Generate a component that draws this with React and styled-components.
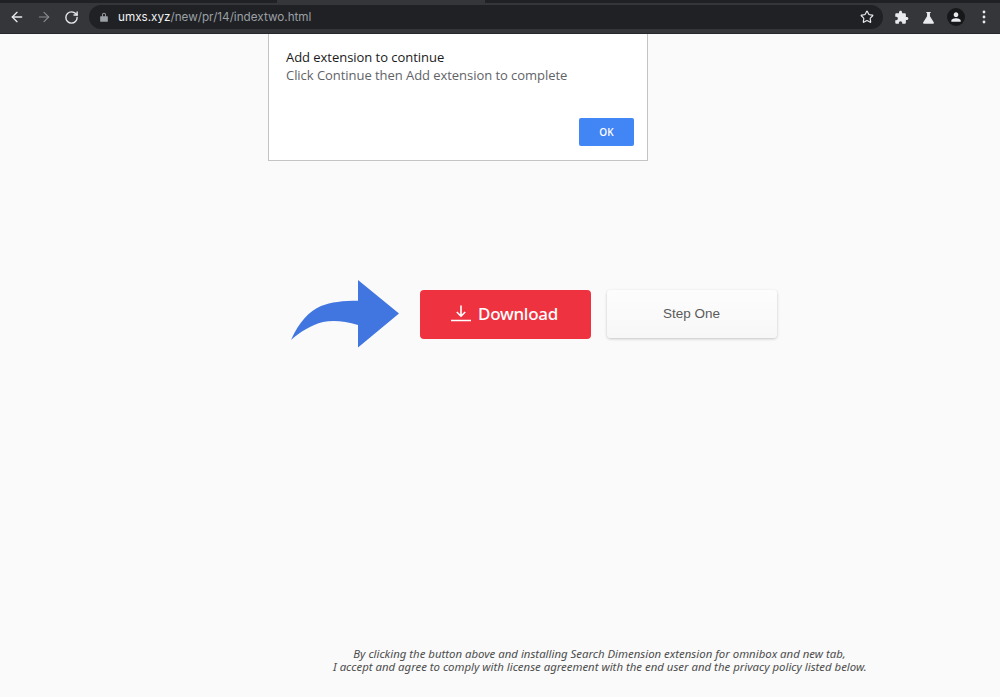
import React from "react";
import styled, { createGlobalStyle } from "styled-components";
import { ArrowLeft, ArrowRight, RotateCw, Star } from "lucide-react";

const Global = createGlobalStyle`
  html, body { margin: 0; padding: 0; background: #fafafa; }
  * { box-sizing: border-box; }
`;

const Page = styled.div`
  width: 1000px;
  height: 697px;
  display: flex;
  flex-direction: column;
  overflow: hidden;
  background: #fafafa;
`;

const TabStrip = styled.div`
  height: 3px;
  flex: none;
  background: #202124;
  display: flex;
`;

const ActiveTab = styled.div`
  width: 208px;
  margin-left: 277px;
  background: #35363a;
`;

const Toolbar = styled.div`
  height: 31px;
  flex: none;
  background: #35363a;
  border-bottom: 1px solid #26272a;
  display: flex;
  align-items: center;
  padding: 0 9px 2px 9px;
  color: #e8eaed;
`;

const NavButton = styled.span`
  width: 16px;
  height: 16px;
  display: flex;
  align-items: center;
  justify-content: center;
  margin-right: ${(p) => p.$gap || 0}px;
  color: ${(p) => (p.$off ? "#8a8c90" : "#e8eaed")};
`;

const Omnibox = styled.div`
  width: 794px;
  height: 24px;
  margin-left: 10px;
  padding: 0 9px 0 10px;
  border-radius: 12px;
  background: #202124;
  display: flex;
  align-items: center;
  font: 11.7px "Inter", "Liberation Sans", sans-serif;
`;

const Host = styled.span`
  color: #f1f3f4;
  margin-left: 9px;
`;

const UrlPath = styled.span`
  color: #9aa0a6;
  flex: 1;
`;

const ToolIcons = styled.div`
  flex: 1;
  display: flex;
  align-items: center;
  justify-content: space-between;
  padding: 0 0 0 11px;
`;

const ToolIcon = styled.svg`
  width: ${(p) => p.$size || 15}px;
  height: ${(p) => p.$size || 15}px;
  fill: #e8eaed;
  flex: none;
`;

const Avatar = styled.span`
  width: 18px;
  height: 18px;
  border-radius: 50%;
  background: #17181a;
  display: flex;
  align-items: center;
  justify-content: center;
`;

const Viewport = styled.main`
  flex: 1;
  display: flex;
  flex-direction: column;
`;

const Dialog = styled.div`
  width: 380px;
  height: 127px;
  margin-left: 268px;
  background: #fff;
  border: 1px solid #c4c4c4;
  border-top: none;
  padding: 14px 13px 14px 17px;
  display: flex;
  flex-direction: column;
  font-family: "Open Sans", "Liberation Sans", sans-serif;
`;

const DialogTitle = styled.div`
  font-size: 13px;
  line-height: 18px;
  letter-spacing: -0.04px;
  color: #1b1b1b;
`;

const DialogText = styled.div`
  font-size: 13px;
  line-height: 18px;
  letter-spacing: -0.05px;
  color: #5f6368;
`;

const DialogFoot = styled.div`
  margin-top: auto;
  display: flex;
  justify-content: flex-end;
`;

const OkButton = styled.button`
  width: 55px;
  height: 28px;
  padding: 0;
  border: none;
  border-radius: 2px;
  background: #4285f4;
  color: #fff;
  font: 600 10px "Open Sans", "Liberation Sans", sans-serif;
`;

const ActionRow = styled.div`
  display: flex;
  align-items: center;
  margin: 119px 0 0 291px;
`;

const Arrow = styled.svg`
  width: 108px;
  height: 68px;
  flex: none;
`;

const DownloadButton = styled.button`
  width: 171px;
  height: 49px;
  margin-left: 21px;
  padding: 0 2px 2px 0;
  border: none;
  border-radius: 4px;
  background: #ee3240;
  color: #fff;
  display: flex;
  align-items: center;
  justify-content: center;
  gap: 7px;
  font: 500 17px "Noto Sans", "Open Sans", sans-serif;
  letter-spacing: -0.25px;
`;

const DownloadIcon = styled.svg`
  width: 20px;
  height: 20px;
  stroke: #fff;
  fill: none;
  flex: none;
`;

const StepButton = styled.button`
  width: 170px;
  height: 48px;
  margin-left: 15.5px;
  padding: 0 0 2px;
  border: none;
  border-radius: 4px;
  background: linear-gradient(#fdfdfd, #f7f7f7);
  box-shadow: 0 1px 3px rgba(0, 0, 0, 0.22);
  color: #5a5a5a;
  font: 13.5px "Liberation Sans", Arial, sans-serif;
`;

const Legal = styled.p`
  margin: auto 134px 24px 0;
  align-self: flex-end;
  width: 533px;
  text-align: center;
  white-space: nowrap;
  font: italic 11.4px/13px "Noto Sans", "Open Sans", sans-serif;
  color: #4d4d4d;
`;

export default function App() {
  return (
    <Page>
      <Global />
      <TabStrip><ActiveTab /></TabStrip>
      <Toolbar>
        <NavButton $gap={11}><ArrowLeft size={16} strokeWidth={2} /></NavButton>
        <NavButton $gap={11} $off><ArrowRight size={16} strokeWidth={1.6} /></NavButton>
        <NavButton><RotateCw size={15} strokeWidth={2.2} /></NavButton>
        <Omnibox>
          <ToolIcon $size={10} viewBox="0 0 10 12">
            <path fill="#9aa0a6" d="M2.6 5V3.4a2.4 2.4 0 0 1 4.8 0V5H9a.6.6 0 0 1 .6.6v5.4a.6.6 0 0 1-.6.6H1a.6.6 0 0 1-.6-.6V5.6A.6.6 0 0 1 1 5zm1.1 0h2.6V3.4a1.3 1.3 0 0 0-2.6 0z" />
          </ToolIcon>
          <Host>umxs.xyz</Host>
          <UrlPath>/new/pr/14/indextwo.html</UrlPath>
          <Star size={14} color="#e8eaed" strokeWidth={2} />
        </Omnibox>
        <ToolIcons>
          <ToolIcon viewBox="0 0 24 24">
            <path d="M20.5 11H19V7c0-1.1-.9-2-2-2h-4V3.5C13 2.12 11.88 1 10.5 1S8 2.12 8 3.5V5H4c-1.1 0-1.99.9-1.99 2v3.8H3.5c1.49 0 2.7 1.21 2.7 2.7s-1.21 2.7-2.7 2.7H2V20c0 1.1.9 2 2 2h3.8v-1.5c0-1.49 1.21-2.7 2.7-2.7 1.49 0 2.7 1.21 2.7 2.7V22H17c1.1 0 2-.9 2-2v-4h1.5c1.38 0 2.5-1.12 2.5-2.5S21.88 11 20.5 11z" />
          </ToolIcon>
          <ToolIcon viewBox="0 0 24 24">
            <path d="M8.5 3h7v1.8h-1.2v5.2l6.1 9.4c.7 1.1-.1 2.6-1.4 2.6H5c-1.3 0-2.1-1.5-1.4-2.6l6.1-9.4V4.8H8.5z" />
          </ToolIcon>
          <Avatar>
            <ToolIcon $size={14} viewBox="0 0 24 24">
              <path d="M12 12c2.21 0 4-1.79 4-4s-1.79-4-4-4-4 1.79-4 4 1.79 4 4 4zm0 2c-2.67 0-8 1.34-8 4v2h16v-2c0-2.66-5.33-4-8-4z" />
            </ToolIcon>
          </Avatar>
          <ToolIcon $size={14} viewBox="0 0 14 14">
            <circle cx="7" cy="2" r="1.4" />
            <circle cx="7" cy="7" r="1.4" />
            <circle cx="7" cy="12" r="1.4" />
          </ToolIcon>
        </ToolIcons>
      </Toolbar>
      <Viewport>
        <Dialog>
          <DialogTitle>Add extension to continue</DialogTitle>
          <DialogText>Click Continue then Add extension to complete</DialogText>
          <DialogFoot><OkButton>OK</OkButton></DialogFoot>
        </Dialog>
        <ActionRow>
          <Arrow viewBox="0 0 108 68">
            <path fill="#4176e0" d="M0 60 C8 42 18 31 30 26 C40 22 52 20.7 67 20.7 L67 0 L108 33.5 L67 67.5 L67 45 C54 41 42 40 32 42 C20 45 9 52 0 60 Z" />
          </Arrow>
          <DownloadButton>
            <DownloadIcon viewBox="0 0 20 20" strokeWidth="1.6">
              <path d="M10 2.5V13M5.8 9 10 13.2 14.2 9M0 17.5H20" />
            </DownloadIcon>
            Download
          </DownloadButton>
          <StepButton>Step One</StepButton>
        </ActionRow>
        <Legal>
          By clicking the button above and installing Search Dimension extension for omnibox and new tab,
          <br />
          I accept and agree to comply with license agreement with the end user and the privacy policy listed below.
        </Legal>
      </Viewport>
    </Page>
  );
}
